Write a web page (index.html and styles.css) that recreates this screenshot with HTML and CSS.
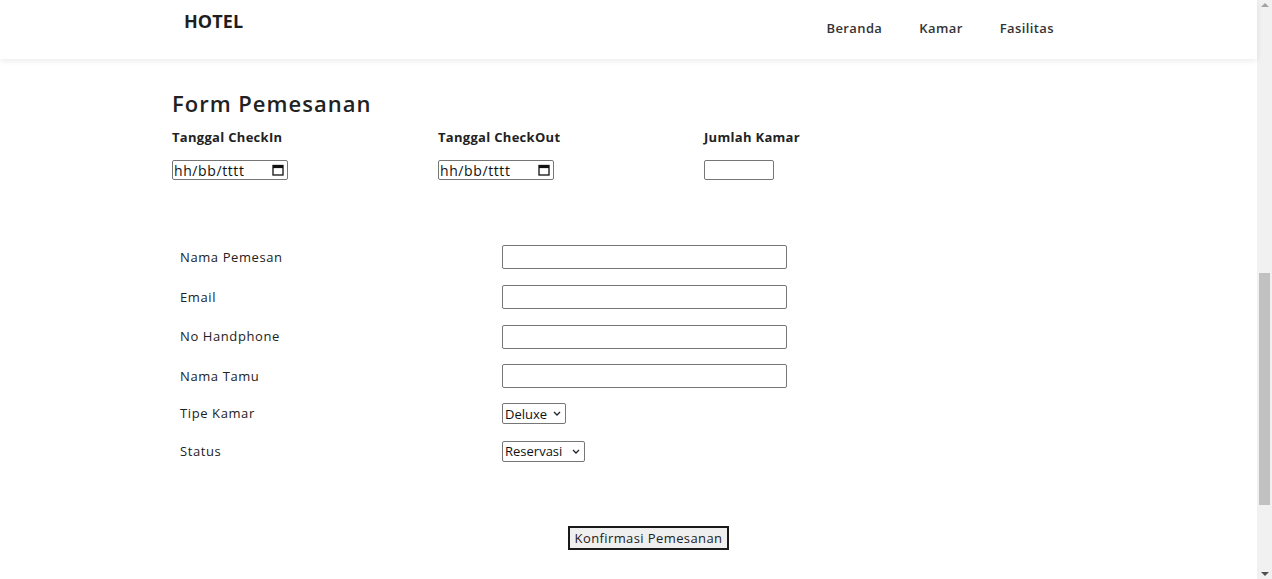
FILE: index.html
```html
<!DOCTYPE html>
<html lang="id">
<head>
<meta charset="utf-8">
<title>Form Pemesanan</title>
<link rel="stylesheet" href="styles.css">
</head>
<body>
<div class="viewport">
  <div class="page">
    <header class="topbar">
      <div class="brand">HOTEL</div>
      <nav class="nav">
        <a href="#">Beranda</a>
        <a href="#">Kamar</a>
        <a href="#">Fasilitas</a>
      </nav>
    </header>
    <main class="content">
      <h2 class="title">Form Pemesanan</h2>
      <div class="dates">
        <div class="date-col">
          <label class="date-label">Tanggal CheckIn</label>
          <div class="fake-date"><span>hh/bb/tttt</span>
            <svg class="cal" viewBox="0 0 12 12" width="12" height="12"><rect x="1" y="1.5" width="10" height="9.5" fill="none" stroke="#111" stroke-width="1.3"/><rect x="1" y="1.5" width="10" height="2.6" fill="#111"/></svg>
          </div>
        </div>
        <div class="date-col">
          <label class="date-label">Tanggal CheckOut</label>
          <div class="fake-date"><span>hh/bb/tttt</span>
            <svg class="cal" viewBox="0 0 12 12" width="12" height="12"><rect x="1" y="1.5" width="10" height="9.5" fill="none" stroke="#111" stroke-width="1.3"/><rect x="1" y="1.5" width="10" height="2.6" fill="#111"/></svg>
          </div>
        </div>
        <div class="date-col">
          <label class="date-label">Jumlah Kamar</label>
          <input class="num" type="text">
        </div>
      </div>
      <div class="form-grid">
        <div class="lbl">Nama Pemesan</div><div class="fld"><input class="txt" type="text"></div>
        <div class="lbl">Email</div><div class="fld"><input class="txt" type="text"></div>
        <div class="lbl">No Handphone</div><div class="fld"><input class="txt" type="text"></div>
        <div class="lbl">Nama Tamu</div><div class="fld"><input class="txt" type="text"></div>
        <div class="lbl">Tipe Kamar</div><div class="fld"><select class="sel sel-tipe"><option>Deluxe</option><option>Superior</option></select></div>
        <div class="lbl">Status</div><div class="fld"><select class="sel sel-status"><option>Reservasi</option><option>Checkin</option></select></div>
      </div>
      <div class="actions"><button class="btn" type="button">Konfirmasi Pemesanan</button></div>
    </main>
  </div>
  <div class="scrollbar">
    <div class="arrow up"></div>
    <div class="track"><div class="thumb"></div></div>
    <div class="arrow down"></div>
  </div>
</div>
</body>
</html>
```
FILE: styles.css
```css
html, body {
  margin: 0;
  padding: 0;
  height: 579px;
  overflow: hidden;
  background: #fff;
}
body {
  font-family: "Open Sans", "Liberation Sans", sans-serif;
  color: #212529;
}
.viewport {
  display: flex;
  height: 579px;
}
.page {
  flex: 1;
  min-width: 0;
  display: flex;
  flex-direction: column;
}
.topbar {
  height: 59px;
  flex: none;
  display: flex;
  align-items: flex-start;
  padding: 0 203px 0 184px;
  box-shadow: 0 2px 6px rgba(0,0,0,0.08);
  position: relative;
  z-index: 1;
}
.brand {
  font-weight: 700;
  font-size: 18px;
  line-height: 24px;
  padding-top: 9px;
  color: #1e1e1e;
  letter-spacing: 0.1px;
}
.nav {
  margin-left: auto;
  display: flex;
  gap: 37px;
  padding-top: 19px;
}
.nav a {
  font-size: 13px;
  font-weight: 600;
  line-height: 18px;
  color: #333;
  text-decoration: none;
  letter-spacing: 0.4px;
}
.content {
  padding: 0 132px 0 172px;
}
.title {
  margin: 29px 0 0 0;
  font-size: 22px;
  font-weight: 600;
  line-height: 30px;
  color: #222;
  letter-spacing: 1px;
}
.dates {
  display: flex;
  margin-top: 10px;
}
.date-col {
  width: 266px;
  display: flex;
  flex-direction: column;
  align-items: flex-start;
}
.date-label {
  font-size: 13px;
  font-weight: 700;
  line-height: 18px;
  color: #222;
  letter-spacing: 0.3px;
}
.fake-date {
  margin-top: 14px;
  box-sizing: border-box;
  width: 116px;
  height: 20px;
  border: 1px solid #767676;
  border-radius: 2px;
  display: flex;
  align-items: center;
  justify-content: space-between;
  padding: 0 2px 0 1px;
  font-size: 14px;
  letter-spacing: 0.6px;
  color: #111;
}
.cal { margin-right: 1px; }
.num {
  margin: 14px 0 0 0;
  box-sizing: border-box;
  width: 70px;
  height: 20px;
  border: 1px solid #767676;
  border-radius: 2px;
  padding: 1px 2px;
  font-family: inherit;
}
.form-grid {
  margin-top: 57px;
  display: grid;
  grid-template-columns: 330px auto;
  grid-template-rows: 40px 40px 39px 40px 35px 40px;
  align-items: center;
}
.lbl {
  padding-left: 8px;
  font-size: 13px;
  color: #222;
  letter-spacing: 0.6px;
  padding-bottom: 1px;
}
.txt {
  display: block;
  box-sizing: border-box;
  width: 285px;
  height: 24px;
  margin: 0;
  border: 1px solid #767676;
  border-radius: 2px;
  font-family: inherit;
}
.sel {
  display: block;
  box-sizing: border-box;
  height: 21px;
  margin: 0;
  font-family: inherit;
  font-size: 13px;
  color: #111;
  border: 1px solid #767676;
  border-radius: 2px;
  padding: 0 0 0 2px;
  appearance: none;
  -webkit-appearance: none;
  background-color: #fff;
  background-image: url("data:image/svg+xml;utf8,<svg xmlns='http://www.w3.org/2000/svg' width='8' height='5' viewBox='0 0 8 5'><path d='M1 1 L4 4 L7 1' fill='none' stroke='%23222' stroke-width='1.3'/></svg>");
  background-repeat: no-repeat;
  background-position: right 4px center;
  background-size: 8px 5px;
}
.sel-tipe { width: 64px; }
.sel-status { width: 83px; }
.actions {
  margin-top: 55px;
  display: flex;
  justify-content: center;
}
.btn {
  box-sizing: border-box;
  width: 161px;
  height: 24px;
  background: #efefef;
  border: 2px solid #1a1a1a;
  font-family: inherit;
  font-size: 13px;
  color: #222;
  padding: 0 0 1px 0;
  letter-spacing: 0.4px;
}
.scrollbar {
  width: 15px;
  flex: none;
  background: #f1f1f1;
  display: flex;
  flex-direction: column;
}
.arrow {
  height: 17px;
  flex: none;
  display: flex;
  justify-content: center;
  align-items: center;
}
.arrow.up::before {
  content: "";
  border-left: 4px solid transparent;
  border-right: 4px solid transparent;
  border-bottom: 4px solid #a3a3a3;
  margin-top: -7px;
}
.arrow.down::before {
  content: "";
  border-left: 4px solid transparent;
  border-right: 4px solid transparent;
  border-top: 4px solid #505050;
  margin-top: 7px;
}
.track {
  flex: 1;
  padding: 256px 2px 0 2px;
}
.thumb {
  height: 232px;
  background: #c1c1c1;
}
```
